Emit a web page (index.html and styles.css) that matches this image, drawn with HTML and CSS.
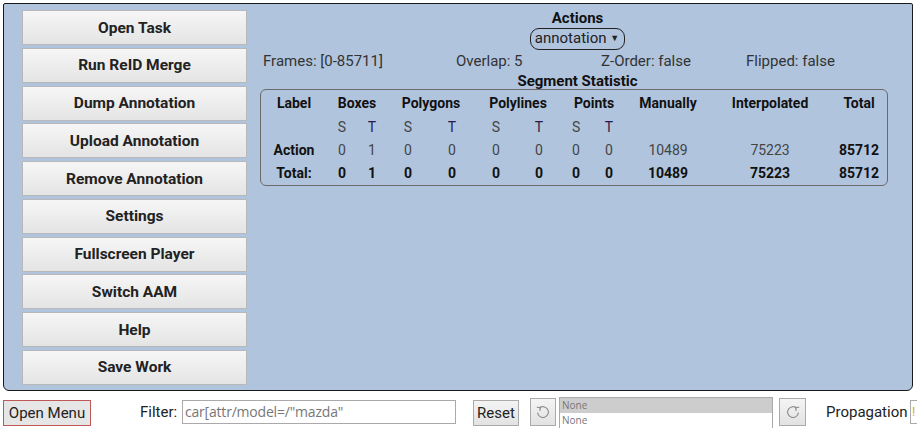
FILE: index.html
```html
<!DOCTYPE html>
<html>
<head>
<meta charset="utf-8">
<link rel="stylesheet" href="styles.css">
</head>
<body>
<div class="panel">
  <div class="menu">
    <button class="mbtn">Open Task</button>
    <button class="mbtn">Run ReID Merge</button>
    <button class="mbtn">Dump Annotation</button>
    <button class="mbtn">Upload Annotation</button>
    <button class="mbtn">Remove Annotation</button>
    <button class="mbtn">Settings</button>
    <button class="mbtn">Fullscreen Player</button>
    <button class="mbtn">Switch AAM</button>
    <button class="mbtn">Help</button>
    <button class="mbtn">Save Work</button>
  </div>
  <div class="info">
    <div class="title">Actions</div>
    <div class="selwrap"><span class="sel">annotation <span class="caret">&#9660;</span></span></div>
    <div class="meta">
      <span class="m1">Frames: [0-85711]</span>
      <span class="m2">Overlap: 5</span>
      <span class="m2">Z-Order: false</span>
      <span class="m3">Flipped: false</span>
    </div>
    <div class="title sub">Segment Statistic</div>
    <div class="statbox">
      <table class="stats">
        <colgroup>
          <col class="w66"><col class="w30"><col class="w30"><col class="w42"><col class="w46"><col class="w42"><col class="w44"><col class="w30"><col class="w36"><col class="w82"><col class="w122"><col class="w56">
        </colgroup>
        <tr class="hd">
          <th>Label</th><th colspan="2">Boxes</th><th colspan="2">Polygons</th><th colspan="2">Polylines</th><th colspan="2">Points</th><th>Manually</th><th>Interpolated</th><th>Total</th>
        </tr>
        <tr class="st">
          <td></td><td>S</td><td class="t">T</td><td>S</td><td class="t">T</td><td>S</td><td class="t">T</td><td>S</td><td class="t">T</td><td></td><td></td><td></td>
        </tr>
        <tr class="row">
          <th>Action</th><td>0</td><td>1</td><td>0</td><td>0</td><td>0</td><td>0</td><td>0</td><td>0</td><td>10489</td><td>75223</td><td class="b">85712</td>
        </tr>
        <tr class="row tot">
          <th>Total:</th><td>0</td><td>1</td><td>0</td><td>0</td><td>0</td><td>0</td><td>0</td><td>0</td><td>10489</td><td>75223</td><td>85712</td>
        </tr>
      </table>
    </div>
  </div>
</div>
<div class="bar">
  <button class="openmenu">Open Menu</button>
  <label class="flabel">Filter:</label>
  <div class="finput">car[attr/model=/"mazda"</div>
  <button class="sbtn reset">Reset</button>
  <button class="sbtn icon undo"><svg width="16" height="16" viewBox="0 0 16 16"><path d="M4.2 4.2 A5.4 5.4 0 1 1 2.6 8.6" fill="none" stroke="#888" stroke-width="1.1"/><path d="M1.8 3.2 L5.4 3.4 L4.8 6.8" fill="none" stroke="#888" stroke-width="1.1"/></svg></button>
  <div class="listbox"><div class="opt selopt">None</div><div class="opt">None</div></div>
  <button class="sbtn icon redo"><svg width="16" height="16" viewBox="0 0 16 16"><path d="M11.8 4.2 A5.4 5.4 0 1 0 13.4 8.6" fill="none" stroke="#888" stroke-width="1.1"/><path d="M14.2 3.2 L10.6 3.4 L11.2 6.8" fill="none" stroke="#888" stroke-width="1.1"/></svg></button>
  <label class="plabel">Propagation</label>
  <div class="pinput">!</div>
</div>
</body>
</html>
```
FILE: styles.css
```css
html, body {
  margin: 0;
  padding: 0;
  background: #ffffff;
}
body {
  padding: 3px 4px 0 3px;
  font-family: "Roboto", sans-serif;
  color: #222;
  width: 917px;
  height: 428px;
  box-sizing: border-box;
  overflow: hidden;
}
.panel {
  display: flex;
  background: #b0c4de;
  border: 1px solid #1a1a1a;
  border-radius: 2px 2px 6px 6px;
  height: 388px;
  box-sizing: border-box;
  width: 910px;
}
.menu {
  display: flex;
  flex-direction: column;
  gap: 2.75px;
  padding: 6px 0 0 18px;
  width: 225px;
}
.mbtn {
  height: 35px;
  width: 225px;
  border: 1px solid #b8b8b8;
  border-radius: 1px;
  background: linear-gradient(#f6f6f6, #e4e4e4);
  font-family: inherit;
  font-weight: bold;
  font-size: 15.5px;
  color: #222;
  padding: 0;
  box-sizing: border-box;
}
.info {
  flex: 1;
  display: flex;
  flex-direction: column;
  padding-top: 6px;
}
.title {
  text-align: center;
  font-weight: bold;
  font-size: 15px;
  line-height: 16px;
  color: #111;
  margin-left: -4px;
}
.selwrap {
  display: flex;
  justify-content: center;
  margin-top: 2px;
  margin-left: -4px;
}
.sel {
  border: 1px solid #222;
  border-radius: 9px;
  padding: 0 5px 0 4px;
  font-size: 15px;
  line-height: 18px;
  color: #222;
}
.caret {
  font-size: 9px;
  position: relative;
  top: -2px;
}
.meta {
  display: flex;
  padding-left: 16px;
  margin-top: 2px;
  font-size: 15px;
  line-height: 18px;
  color: #333;
}
.m1 { width: 193px; flex-shrink: 0; }
.m2 { width: 145px; flex-shrink: 0; }
.m3 { flex-shrink: 0; }
.sub {
  margin-top: 3px;
}
.statbox {
  margin: 0 0 0 13px;
  width: 628px;
  border: 1px solid #6a6a6a;
  border-radius: 6px;
  box-sizing: border-box;
  padding: 2px 0 1px 0;
}
.stats {
  border-collapse: collapse;
  width: 626px;
  table-layout: fixed;
  font-size: 14px;
}
.stats th, .stats td {
  padding: 0;
  text-align: center;
  white-space: nowrap;
}
.w30 { width: 30px; }
.w36 { width: 36px; }
.w42 { width: 42px; }
.w44 { width: 44px; }
.w46 { width: 46px; }
.w56 { width: 56px; }
.w66 { width: 66px; }
.w82 { width: 82px; }
.w122 { width: 122px; }
.hd th {
  font-weight: bold;
  color: #111;
  height: 22px;
}
.st td {
  height: 25px;
  color: #444;
}
.st td.t { color: #2a1a4a; }
.row th {
  font-weight: bold;
  color: #111;
  height: 22px;
}
.row td {
  color: #444;
  height: 22px;
}
.row.tot th, .row.tot td { height: 23px; }
.row td.b { font-weight: bold; color: #111; }
.tot td { font-weight: bold; color: #111; }
.bar {
  display: flex;
  align-items: flex-start;
  margin-top: 6px;
  font-size: 15px;
  width: 914px;
  overflow: hidden;
}
.bar > * {
  flex-shrink: 0;
}
.openmenu {
  height: 26px;
  width: 88px;
  margin-top: 3px;
  border: 1px solid #c05858;
  background: #e6e6e6;
  font-family: inherit;
  font-size: 15px;
  color: #222;
  padding: 0;
}
.flabel {
  margin: 6px 0 0 49px;
  width: 42px;
  color: #222;
  line-height: 18px;
}
.finput {
  margin: 3px 0 0 0;
  width: 274px;
  height: 24px;
  border: 1px solid #aaa;
  box-sizing: border-box;
  padding: 0 2px;
  line-height: 22px;
  color: #777;
  font-family: "Open Sans", sans-serif;
  font-size: 14px;
  letter-spacing: -0.2px;
}
.sbtn {
  margin-top: 3px;
  height: 26px;
  border: 1px solid #aaa;
  background: linear-gradient(#f4f4f4, #e2e2e2);
  font-family: inherit;
  font-size: 15px;
  color: #222;
  padding: 0;
  display: flex;
  align-items: center;
  justify-content: center;
}
.reset {
  margin-left: 17px;
  width: 46px;
}
.icon {
  width: 26px;
  height: 28px;
  margin-top: 1px;
}
.undo { margin-left: 11px; }
.redo { margin-left: 6px; width: 27px; }
.listbox {
  margin: 0 0 0 3px;
  width: 214px;
  height: 40px;
  border: 1px solid #aaa;
  box-sizing: border-box;
  font-family: "Open Sans", sans-serif;
  font-size: 10px;
  color: #777;
  background: #fff;
}
.opt {
  height: 14px;
  line-height: 14px;
  padding-left: 2px;
}
.selopt {
  background: #cdcdcd;
  height: 15px;
}
.plabel {
  margin: 6px 0 0 20px;
  width: 84px;
  color: #222;
  font-size: 15px;
  line-height: 18px;
  white-space: nowrap;
}
.pinput {
  margin: 3px 0 0 0;
  width: 20px;
  height: 24px;
  border: 1px solid #aaa;
  box-sizing: border-box;
  color: #d4b000;
  font-size: 13px;
  line-height: 22px;
  padding-left: 1px;
}
```
